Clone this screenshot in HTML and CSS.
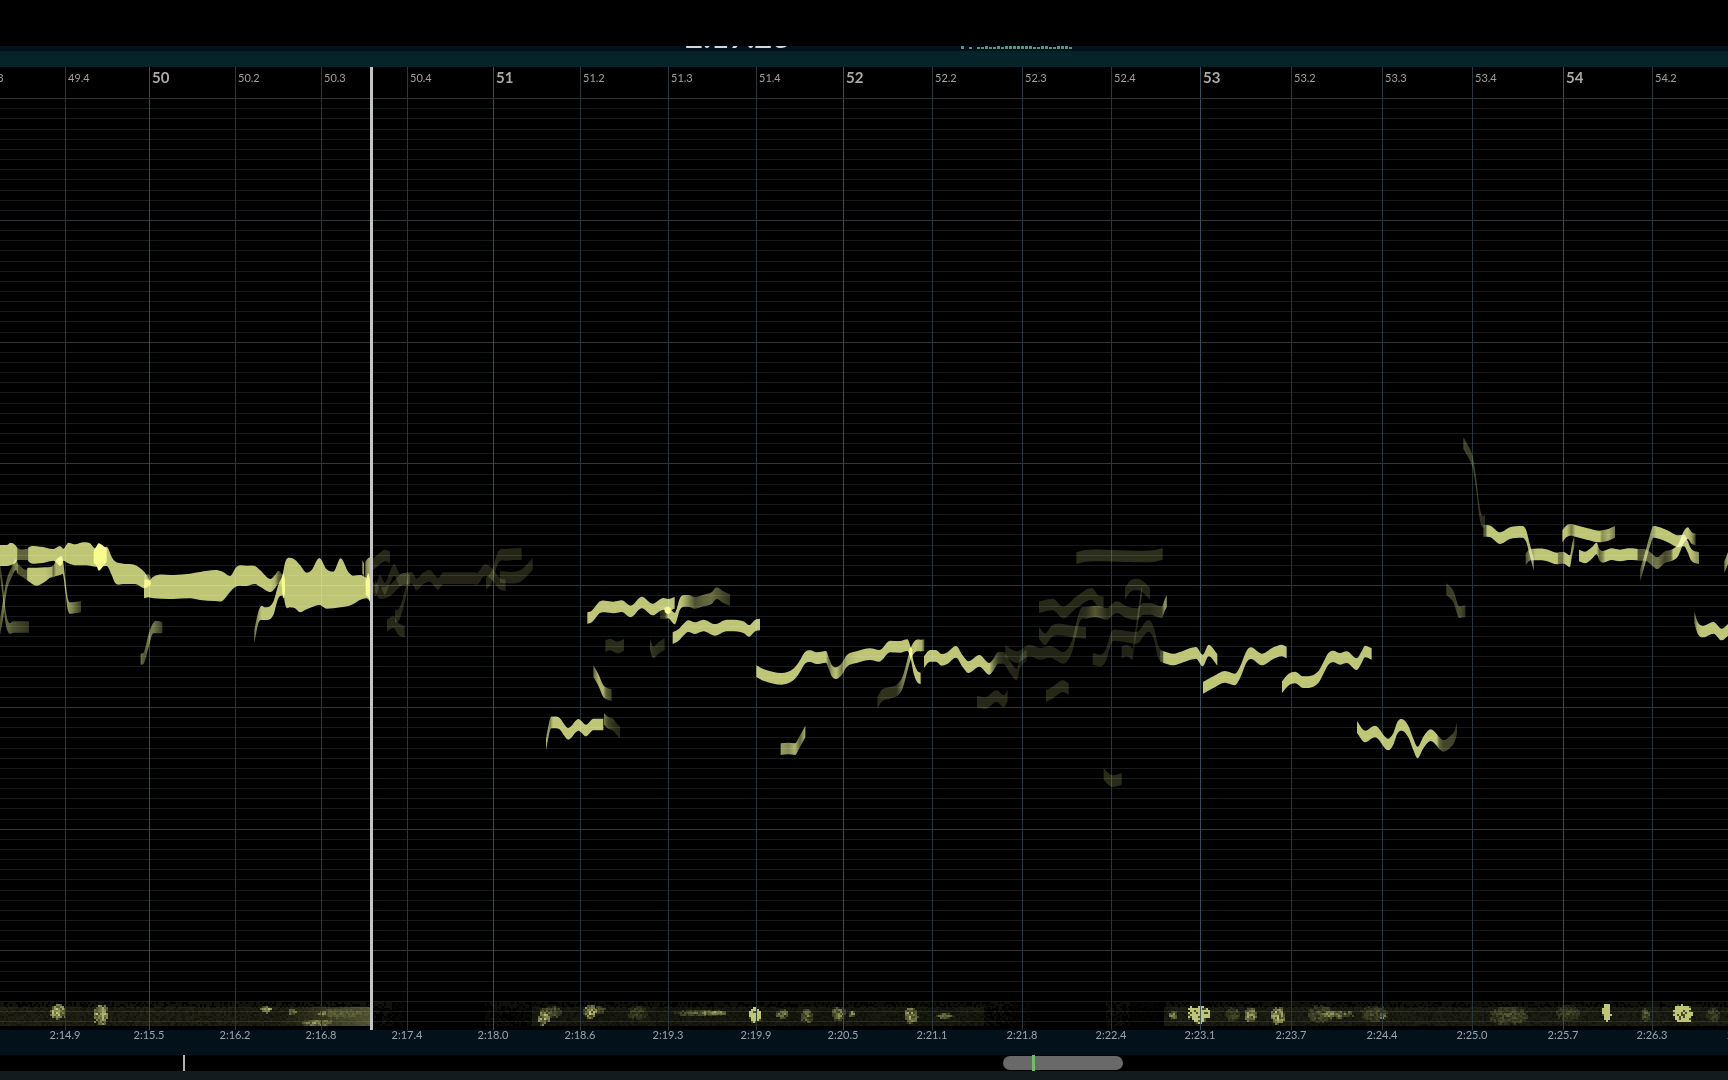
FILE: index.html
```html
<!DOCTYPE html>
<html lang="en">
<head>
<meta charset="utf-8">
<meta name="viewport" content="width=device-width, initial-scale=1">
<title>Note editor</title>
<link rel="stylesheet" href="styles.css">
</head>
<body>
<div class="titlebar"></div>
<header class="transport">
  <div class="clock">2:17.23</div>
  <svg class="meter" id="meter" width="114" height="5" aria-hidden="true"></svg>
</header>
<div class="toolbar"></div>
<main class="editor">
  <ol class="ruler axis">
    <li class="before">49.3</li>
    <li>49.4</li>
    <li class="bar">50</li>
    <li>50.2</li>
    <li>50.3</li>
    <li>50.4</li>
    <li class="bar">51</li>
    <li>51.2</li>
    <li>51.3</li>
    <li>51.4</li>
    <li class="bar">52</li>
    <li>52.2</li>
    <li>52.3</li>
    <li>52.4</li>
    <li class="bar">53</li>
    <li>53.2</li>
    <li>53.3</li>
    <li>53.4</li>
    <li class="bar">54</li>
    <li>54.2</li>
  </ol>
  <svg class="roll" id="roll" viewBox="0 99 1728 931" preserveAspectRatio="none" role="img" aria-label="Notes"></svg>
  <div class="playhead"></div>
</main>
<ol class="times axis">
  <li></li>
  <li>2:14.9</li>
  <li>2:15.5</li>
  <li>2:16.2</li>
  <li>2:16.8</li>
  <li>2:17.4</li>
  <li>2:18.0</li>
  <li>2:18.6</li>
  <li>2:19.3</li>
  <li>2:19.9</li>
  <li>2:20.5</li>
  <li>2:21.1</li>
  <li>2:21.8</li>
  <li>2:22.4</li>
  <li>2:23.1</li>
  <li>2:23.7</li>
  <li>2:24.4</li>
  <li>2:25.0</li>
  <li>2:25.7</li>
  <li>2:26.3</li>
  <li class="after">2:26.9</li>
</ol>
<div class="overview">
  <input class="scroll" type="range" min="0" max="1000" value="624" aria-label="Scroll position">
  <span class="mark"></span>
  <span class="mark current"></span>
</div>
<footer class="status"></footer>
<script src="roll.js"></script>
</body>
</html>
```
FILE: styles.css
```css
* { box-sizing: border-box; }

body {
  margin: 0;
  min-height: 100vh;
  display: flex;
  flex-direction: column;
  overflow: hidden;
  background: #000;
  color: #a0a0a0;
  font: 11px/16px Lato, "Open Sans", sans-serif;
}

ol { margin: 0; padding: 0; list-style: none; }

.titlebar { height: 46px; }

.transport {
  height: 5px;
  display: grid;
  grid-template-columns: 276fr 767fr;
  padding-left: 39.64%;
  align-content: end;
  align-items: end;
  overflow: hidden;
  background: #03101a;
}
.clock { font-size: 31px; line-height: 30px; font-weight: 700; color: #d2d6d8; }
.meter { display: block; }

.toolbar { height: 16px; background: #052329; }

.editor {
  flex: 1;
  display: flex;
  flex-direction: column;
  position: relative;
}

.axis {
  display: grid;
  grid-template-columns:
    minmax(0, 65fr) minmax(0, 84fr) minmax(0, 86fr) minmax(0, 86fr)
    minmax(0, 86fr) minmax(0, 86fr) minmax(0, 87fr) minmax(0, 88fr)
    minmax(0, 88fr) minmax(0, 87fr) minmax(0, 89fr) minmax(0, 90fr)
    minmax(0, 89fr) minmax(0, 89fr) minmax(0, 91fr) minmax(0, 91fr)
    minmax(0, 90fr) minmax(0, 91fr) minmax(0, 89fr) minmax(0, 76fr) 0;
}

.ruler { height: 32px; border-bottom: 1px solid #2b3033; }
.ruler li { border-left: 1px solid #2c363b; padding: 3px 0 0 2px; }
.ruler .bar { border-color: #35505c; font-size: 15px; font-weight: 700; padding-top: 2px; color: #aaa; }
.ruler .before { border: 0; padding-left: 0; margin-left: -18px; }

.roll { flex: 1; display: block; width: 100%; height: 0; min-height: 0; }

.playhead {
  position: absolute;
  top: 0;
  bottom: 0;
  left: 21.41%;
  width: 3px;
  background: #c4c4c2;
}

.times { height: 25px; background: #03111a; color: #9aa4aa; }
.times li { width: 0; display: flex; justify-content: center; white-space: nowrap; line-height: 10px; }
.times .after { justify-content: flex-start; margin-left: -1px; }

.overview { height: 16px; position: relative; }
.scroll {
  appearance: none;
  display: block;
  width: 100%;
  height: 16px;
  margin: 0;
  background: transparent;
}
.scroll::-webkit-slider-thumb {
  appearance: none;
  width: 120px;
  height: 14px;
  border-radius: 7px;
  background: #696969;
}
.mark { position: absolute; top: 0; bottom: 0; left: 10.6%; width: 2px; background: #b0b0b0; }
.current { left: 59.7%; width: 3px; background: #72bd62; }

.status { height: 9px; background: #141b1f; }

.roll .note { mix-blend-mode: screen; }
```
FILE: roll.js
```js
const NS = "http://www.w3.org/2000/svg";
const roll = document.getElementById("roll");
const INK = "#bec575";

function add(parent, tag, attrs) {
  const el = document.createElementNS(NS, tag);
  for (const k in attrs) el.setAttribute(k, attrs[k]);
  parent.appendChild(el);
  return el;
}
function box(x, y, w, h, fill, opacity = 1) {
  add(roll, "rect", { x, y, width: w, height: h, fill, "fill-opacity": opacity, "shape-rendering": "crispEdges" });
}

// Level meter beside the clock
const levels = [3, 0, 2, 0, 2, 2, 3, 2, 2, 3, 2, 3, 3, 3, 3, 3, 3, 3, 2, 2, 3, 3, 2, 2, 3, 3, 3, 2];
levels.forEach((v, i) => {
  if (v) add(document.getElementById("meter"), "rect", { x: i * 4, y: 3 - v, width: 3, height: v, fill: "#4f9880" });
});

// Energy strip along the bottom
let seed = 11;
const rnd = () => (seed = (seed * 16807) % 2147483647) / 2147483647;
const zones = [
  [0, 370, .13], [370, 394, .13], [394, 404, .06], [485, 532, .1], [532, 984, .1],
  [984, 1012, .12], [1012, 1030, .05], [1106, 1130, .12], [1130, 1160, .03], [1164, 1728, .12]
];
for (const [a, b, base] of zones) {
  const solid = b - a > 100;
  if (solid) box(a, 1007, b - a, 19, INK, base * .75);
  for (let x = a; x < b; x += 2)
    for (let y = 1002; y < 1026; y += 2) {
      const edge = y < 1007 || !solid ? .6 : .85;
      if (rnd() < edge) box(x, y, 2, 2, INK, (base * (y < 1007 ? .7 : .15 + rnd() * .55)).toFixed(2));
    }
}
for (let x = 280; x < 370; x += 2) box(x, 1007, 2, 19, INK, ((x - 280) / 270).toFixed(2));

const hot = [
  [50, 1004, 16, 16, .95], [94, 1005, 14, 20, .95], [260, 1006, 12, 7, .9], [289, 1009, 8, 6, .7],
  [302, 1020, 32, 6, .6], [318, 1011, 8, 5, .5], [538, 1012, 11, 13, .95], [538, 1006, 24, 12, .4],
  [583, 1005, 14, 13, .85], [594, 1006, 12, 8, .3], [628, 1006, 20, 14, .22], [674, 1010, 50, 6, .4],
  [704, 1011, 22, 4, .7], [749, 1007, 12, 16, 1], [776, 1009, 12, 10, .6], [801, 1009, 12, 14, .5],
  [832, 1007, 14, 14, .6], [849, 1011, 6, 6, .8], [905, 1008, 13, 16, .8], [936, 1013, 18, 6, .5],
  [1169, 1011, 8, 8, .7], [1188, 1006, 22, 17, 1], [1226, 1007, 14, 14, .3], [1245, 1008, 12, 14, .8],
  [1271, 1007, 14, 18, .95], [1308, 1005, 26, 18, .3], [1320, 1011, 34, 7, .6], [1360, 1006, 28, 16, .26],
  [1380, 1013, 6, 6, .8], [1490, 1007, 38, 18, .3], [1556, 1005, 24, 16, .22], [1602, 1004, 9, 17, 1],
  [1642, 1008, 8, 14, .4], [1673, 1004, 20, 20, 1], [1706, 1008, 14, 14, .25], [316, 1009, 46, 9, .25]
];
for (const [hx, hy, w, h, a] of hot)
  for (let x = hx; x < hx + w; x += 2)
    for (let y = hy; y < hy + h; y += 2) {
      const d = Math.hypot((x + 1 - hx - w / 2) / (w / 2), (y + 1 - hy - h / 2) / (h / 2));
      if (d > .85 + rnd() * .3) continue;
      const v = a === 1 ? (rnd() < .85 ? 1 : .3) : a * (1.35 - d * .7) * (.25 + rnd() * .9);
      box(x, y, 2, 2, INK, Math.min(1, v).toFixed(2));
    }

// Semitone rows, the octave rows brighter
for (let k = 1; k <= 91; k++) {
  const y = Math.floor(98.7 + k * 10.146);
  box(0, y, 1728, 1, "#b0c6d2", k % 12 ? .13 : .27);
}
// Beats and bars
[65, 149, 235, 321, 407, 493, 580, 668, 756, 843, 932, 1022, 1111, 1200, 1291, 1382, 1472, 1563, 1652]
  .forEach((x, i) => box(x, 99, 1, 931, [1, 5, 9, 13, 17].includes(i) ? "#35525f" : "#2b373e", .95));

// A smooth curve through the points
function curve(p) {
  let d = "";
  for (let i = 0; i < p.length - 1; i++) {
    const a = p[i - 1] || p[i], b = p[i], c = p[i + 1], e = p[i + 2] || c;
    const w = (c[0] - b[0]) / 3;
    const slope = (m, n, q) => {
      const s = (n[1] - m[1]) / (n[0] - m[0] || 1), t = (q[1] - n[1]) / (q[0] - n[0] || 1);
      return s * t <= 0 ? 0 : (s + t) / 2;
    };
    const sb = i ? slope(a, b, c) : (c[1] - b[1]) / (c[0] - b[0] || 1);
    const sc = p[i + 2] ? slope(b, c, e) : (c[1] - b[1]) / (c[0] - b[0] || 1);
    d += `C${b[0] + w} ${b[1] + sb * w} ${c[0] - w} ${c[1] - sc * w} ${c[0]} ${c[1]}`;
  }
  return d;
}
const defs = add(roll, "defs", {});
let count = 0;
// pts: [x, top, bottom, strength]
function blob(g, pts, color = INK, kind = "note") {
  const x0 = pts[0][0], x1 = pts[pts.length - 1][0];
  const grad = add(defs, "linearGradient", { id: "n" + ++count, gradientUnits: "userSpaceOnUse", x1: x0, x2: x1, y1: 0, y2: 0 });
  let a = 1;
  const stops = pts.map(p => [p[0], a = p[3] ?? a]);
  for (const [x, o] of stops)
    add(grad, "stop", { offset: (x - x0) / (x1 - x0), "stop-color": color, "stop-opacity": o });
  const top = pts.map(p => [p[0], p[1]]);
  const bottom = pts.map(p => [-p[0], p[2]]).reverse();
  const back = curve(bottom).replace(/([C ])(-?[\d.e-]+) (-?[\d.e-]+)/g, (m, s, x, y) => `${s}${-x} ${y}`);
  add(g, "path", {
    d: `M${x0} ${pts[0][1]}${curve(top)}L${x1} ${pts[pts.length - 1][2]}${back}Z`,
    fill: `url(#n${count})`, class: kind
  });
}
// pts: [x, centre, strength]; one semitone thick
const ribbon = (g, pts) => blob(g, pts.map(([x, y, a]) => [x, y - 16, y + 19, a]));

// Points are held in thirds of a unit, counted from the phrase's origin
const phrases = [
  { at: [0, 520],
    blobs: [
      [[0,75,138],[20,75,138],[32,68,135],[45,74,130],[51,82,122,1],[53,85,120,.5],[83,86,120,.5],[86,82,125,1],[120,80,130],[160,87,122],[180,78,135],[190,86,122],[205,68,130],[225,73,136],[250,67,136],[270,70,137],[285,85,140],[300,85,140],[320,80,138],[335,110,165],[345,124,188],[370,131,192],[405,135,192],[435,158,205],[452,185,196,.4]],
      [[432,195,235],[445,186,232],[460,170,235],[520,165,237],[570,161,235],[600,156,240],[645,150,243],[668,155,242],[690,168,216],[710,140,199],[740,137,198],[765,138,192],[780,150,200],[812,177,216],[825,165,205,.9],[835,152,192,.5],[848,165,195,.3]],
      [[433,165,200,.5],[445,163,195,.5],[453,172,190,.4]],
      [[50,128,160,.4],[80,150,180,.4],[83,143,182,1],[110,143,197],[135,142,185],[155,140,172,.9],[160,138,172,.5],[168,120,168,.9],[180,110,165],[188,115,162],[196,180,215,.9],[204,238,272,.8],[212,247,281,.7],[243,243,277,.3]],
      [[0,130,170,.3],[8,185,230,.5],[16,265,305,.5],[24,303,336,.5],[40,304,338,.4],[87,304,338,.25]],
      [[0,300,345,.4],[10,235,290,.6],[20,180,215,.5],[35,142,172,.4],[48,118,150,.7],[54,130,160,.3]],
      [[422,402,434,.6],[432,395,430,.4],[445,345,385,.6],[460,308,340,.6],[487,306,340,.3]],
      [[763,330,370,.6],[775,275,310,.8],[785,257,300,1],[795,262,300],[820,245,285],[835,195,235],[850,165,225]],
      [[848,165,200],[856,125,255],[870,113,262],[885,119,265],[900,135,277],[920,158,268],[935,150,262],[958,114,255],[980,148,266],[1000,155,265],[1022,115,262],[1045,156,258],[1060,167,252],[1080,165,240],[1100,175,235],[1112,190,248]],
      [[1087,120,160,.8],[1092,130,170,.8]],
      [[1096,125,190,.6],[1104,115,220,.8],[1112,112,248,.9]]
    ],
    glow: [
      [[281,92,130],[290,78,138],[296,70,152],[310,78,138],[320,85,126]],
      [[173,120,130],[180,112,138],[188,120,130]],
      [[845,175,200],[850,160,235],[855,180,220]],
      [[433,180,205],[442,178,198],[452,186,194]],
      [[1097,190,225],[1105,160,232],[1112,190,248]]
    ] },
  { at: [340, 530],
    ribbons: [
      [[96,105,.2],[115,88],[135,75],[150,80]],
      [[97,165,.18],[107,180],[120,150],[135,175],[150,140],[163,118],[180,148],[200,143],[215,142],[230,162],[250,143],[268,136],[295,160],[310,143],[400,143],[410,145],[435,118],[455,130],[480,160],[497,165]],
      [[105,165,.18],[120,188],[150,180],[170,160],[190,145],[210,147]],
      [[165,258,.2],[178,250],[190,215],[205,150]],
      [[141,285,.2],[160,275],[175,295],[194,303]],
      [[438,160,.19],[455,140],[475,80],[500,73],[545,70]],
      [[480,140,.19],[540,137],[560,120],[578,100]]
    ] },
  { at: [530, 570],
    ribbons: [
      [[172,143],[185,138],[210,110],[225,108],[250,111],[275,107],[302,123],[335,96],[368,117],[400,100],[415,103],[434,97]],
      [[390,128,.2],[405,128,.3],[414,126,1],[434,144],[450,100],[462,91,.9],[475,91,.7],[495,97,.4],[520,90,.5],[545,83,.55],[560,68,.45],[580,80,.35],[600,88,.25]],
      [[428,203],[445,194],[460,178],[475,167],[495,173],[520,165],[555,178],[590,165],[640,170],[657,181],[676,165],[690,162]],
      [[226,227,.22],[240,222],[262,231],[282,223]],
      [[360,222,.3],[370,246,.25],[385,233,.2],[404,220,.2]],
      [[190,302,.5],[205,328,.9],[220,362,.9],[228,368,.5],[245,374,.3]],
      [[48,523,.9],[54,490,.8],[61,460,.7],[69,456,1],[88,459],[115,490],[145,463],[168,480],[190,462],[220,462]],
      [[222,445,.6],[235,457,.35],[250,463,.25],[262,478,.2],[270,485,.2]],
      [[679,302],[700,313],[755,325],[790,312],[808,290],[825,262],[840,257],[860,263],[888,259,1],[897,280,.5],[905,300,.8],[918,308,1],[935,296,.6],[950,272,.9],[980,260,1],[1020,251],[1048,256],[1080,228],[1110,229],[1132,224],[1142,248],[1152,295],[1162,318],[1172,324]],
      [[1042,397,.2],[1055,376,.25],[1080,367,.25],[1100,360,.25],[1118,335,.6],[1142,250,.9],[1155,228,1],[1175,225,.9],[1183,224,.4]],
      [[752,536,.8],[775,534,.7],[795,536,.9],[810,512,.5],[826,483,.9]]
    ],
    glow: [[[404,114,125],[413,110,132],[422,114,128]], [[1138,238,252],[1142,232,262],[1147,238,252]]] },
  { at: [850, 530],
    ribbons: [
      [[222,394],[240,376],[258,376],[275,388],[290,384],[318,364],[338,392],[355,410],[388,391],[418,415,1],[430,403,.6],[445,382,.3],[460,382,.2],[480,410,.2],[500,432,.18],[512,392,.15],[530,375,.15]],
      [[466,362,.18],[500,380],[540,360],[570,370],[600,364],[640,382],[665,350,.2],[680,290,.25],[690,255,.2],[710,247,.25],[735,243,.45],[770,250,.22],[800,230],[830,245],[860,251],[880,235],[900,235],[935,245,.3],[945,222,.8],[951,212,.5]],
      [[567,230,.2],[608,222],[640,246],[680,215],[725,190],[745,212],[761,216]],
      [[567,307,.2],[585,326],[605,303],[625,297],[680,305],[708,307]],
      [[679,83,.23],[700,77],[760,75],[860,78],[915,76],[938,70]],
      [[825,190,.19],[840,168],[862,162],[880,170],[900,190]],
      [[728,386,.19],[765,380],[785,320],[800,315],[860,322],[895,286],[912,310],[925,365],[940,378,.2]],
      [[815,365,.18],[830,360],[848,372]],
      [[848,372,.12],[875,182,.3]],
      [[381,513,.2],[405,518],[440,497],[462,512],[473,495]],
      [[588,497,.2],[610,485],[638,467],[656,475]],
      [[761,730,.22],[775,745],[790,752],[815,745]],
      [[930,378,.2],[939,379,.3],[941,380,1],[970,387],[1000,378],[1038,367],[1058,390],[1076,360],[1102,388]]
    ] },
  { at: [1150, 630],
    ribbons: [
      [[159,172],[190,155],[225,139],[255,147],[270,126],[290,78],[303,68],[335,87],[370,68],[395,60],[410,66]],
      [[396,170],[415,148],[435,141],[460,155],[505,140],[520,113],[535,85],[550,78],[570,85],[590,80],[620,101],[635,80],[645,63],[665,70]],
      [[621,290],[645,318],[675,303],[715,342],[730,325],[742,292],[755,283],[775,303],[790,342],[803,366],[820,336],[842,314],[860,328,1],[868,338,.5],[880,346,.35],[905,330,.35],[915,315,.3],[921,292,.25]]
    ] },
  { at: [1420, 420],
    ribbons: [
      [[130,68,.35],[145,94,.3],[158,125,.3],[168,185,.35],[178,270,.3],[185,300,.25],[195,302,.2]],
      [[190,331,.4],[198,331,.5],[201,331,1],[212,333],[240,353],[270,338],[305,334],[318,345],[330,390,.9],[341,432,.8]],
      [[317,416,.4],[332,402,.7],[345,402,1],[375,403],[412,414,1],[416,413,.6],[430,412,.6],[434,413,1],[450,422],[456,390,.8],[463,362,.5]],
      [[427,347,.9],[440,332,1],[455,328,.6],[466,331,1],[500,340],[540,348,1],[546,347,.7],[565,343,.9],[585,334,.6]],
      [[477,405],[495,411],[515,398],[530,384],[538,402,.5],[548,409,.7],[556,407,1],[575,401],[600,405],[625,401],[650,402,1],[656,403,.4],[680,405,.5],[690,412,.5],[712,428,.6],[735,410,.35],[753,405,.5],[760,402,1],[775,388],[790,352],[803,338],[815,352,.8],[827,357,.3]],
      [[660,465,.3],[675,415,.8],[690,360,.7],[700,334,.8],[708,335,1],[740,346],[775,362],[792,360],[803,378],[812,400],[837,413,.7]],
      [[823,590,.5],[832,620,.9],[842,632,1],[850,633],[880,622],[905,642],[924,628]],
      [[913,440,.6],[924,412,.9]],
      [[79,506,.3],[100,528,.3],[118,575,.4],[136,572,.25]]
    ] }
];
for (const { at: [x, y], blobs = [], ribbons = [], glow = [] } of phrases) {
  const g = add(roll, "g", { transform: `translate(${x} ${y}) scale(${1 / 3})` });
  blobs.forEach(p => blob(g, p));
  ribbons.forEach(p => ribbon(g, p));
  glow.forEach(p => blob(g, p, "#f8fc8e", "glow"));
}
```
